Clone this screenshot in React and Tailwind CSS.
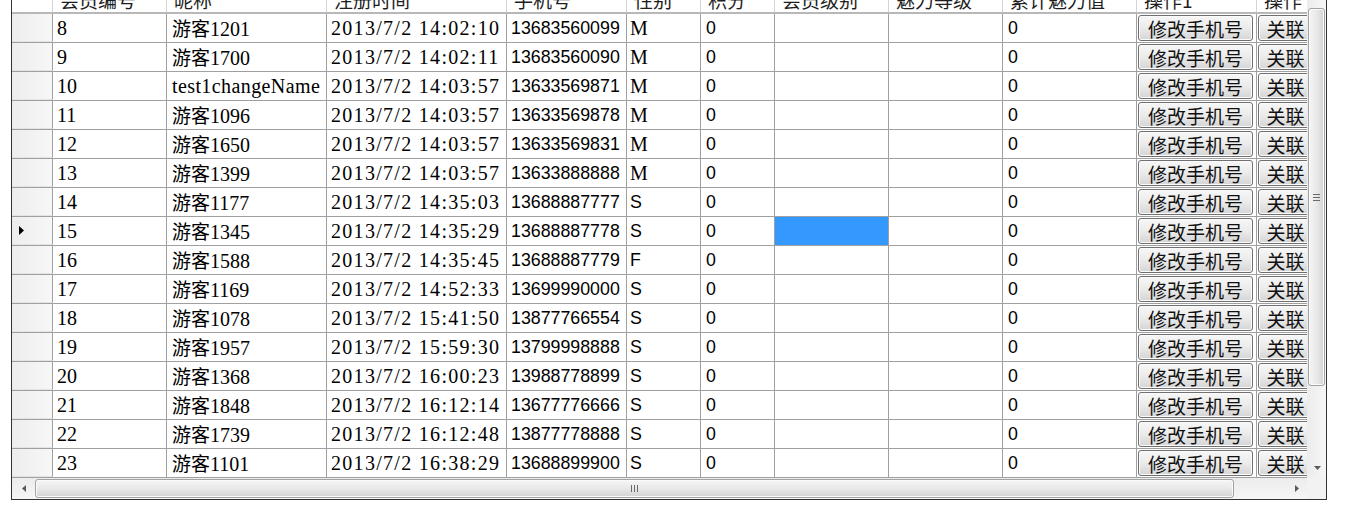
import React from 'react';

const serif = "font-['Liberation_Serif','Noto_Sans_CJK_SC',serif] text-[20px] leading-[24px]";
const sans = "font-['Liberation_Sans','Noto_Sans_CJK_SC',sans-serif] text-[17.8px] leading-[24px]";
const cjk = "font-['Noto_Sans_CJK_SC',sans-serif] text-[19px]";

const rows = [
  ['8', '游客1201', '2013/7/2 14:02:10', '13683560099', 'M'],
  ['9', '游客1700', '2013/7/2 14:02:11', '13683560090', 'M'],
  ['10', 'test1changeName', '2013/7/2 14:03:57', '13633569871', 'M'],
  ['11', '游客1096', '2013/7/2 14:03:57', '13633569878', 'M'],
  ['12', '游客1650', '2013/7/2 14:03:57', '13633569831', 'M'],
  ['13', '游客1399', '2013/7/2 14:03:57', '13633888888', 'M'],
  ['14', '游客1177', '2013/7/2 14:35:03', '13688887777', 'S'],
  ['15', '游客1345', '2013/7/2 14:35:29', '13688887778', 'S'],
  ['16', '游客1588', '2013/7/2 14:35:45', '13688887779', 'F'],
  ['17', '游客1169', '2013/7/2 14:52:33', '13699990000', 'S'],
  ['18', '游客1078', '2013/7/2 15:41:50', '13877766554', 'S'],
  ['19', '游客1957', '2013/7/2 15:59:30', '13799998888', 'S'],
  ['20', '游客1368', '2013/7/2 16:00:23', '13988778899', 'S'],
  ['21', '游客1848', '2013/7/2 16:12:14', '13677776666', 'S'],
  ['22', '游客1739', '2013/7/2 16:12:48', '13877778888', 'S'],
  ['23', '游客1101', '2013/7/2 16:38:29', '13688899900', 'S'],
];

const SELECTED = 7;

const headers = [
  { title: '会员编号', w: 'w-[114px]' },
  { title: '昵称', w: 'w-[160px]' },
  { title: '注册时间', w: 'w-[180px]' },
  { title: '手机号', w: 'w-[120px]' },
  { title: '性别', w: 'w-[74px]' },
  { title: '积分', w: 'w-[74px]' },
  { title: '会员级别', w: 'w-[114px]' },
  { title: '魅力等级', w: 'w-[114px]' },
  { title: '累计魅力值', w: 'w-[134px]' },
  { title: '操作1', w: 'w-[120px]' },
  { title: '操作', w: 'w-[60px]' },
];

function Cell({ w, className = '', children }) {
  return (
    <div className={`${w} shrink-0 h-full border-r border-[#a0a0a0] flex items-center overflow-hidden whitespace-nowrap text-black ${className}`}>
      {children}
    </div>
  );
}

function Nick({ name }) {
  if (name.startsWith('游客')) {
    return (
      <span className={serif}>
        <span className={cjk}>游客</span>
        {name.slice(2)}
      </span>
    );
  }
  return <span className={`${serif} tracking-[0.4px]`}>{name}</span>;
}

function GridButton({ label }) {
  return (
    <button className="w-full h-[26px] mx-px rounded-[3px] border border-[#707070] bg-gradient-to-b from-[#f7f7f7] via-[#ebebeb] to-[#d5d5d5] shadow-[inset_0_0_0_1px_#fbfbfb] flex items-center justify-center text-[19px] leading-none text-[#111] font-['Noto_Sans_CJK_SC',sans-serif]">
      {label}
    </button>
  );
}

function HeaderRow() {
  return (
    <div className="flex h-[26px] border-b-2 border-[#b8b8b8] bg-white">
      <div className="w-[41px] shrink-0 border-r border-[#d5d5d5]" />
      {headers.map((h) => (
        <div
          key={h.title}
          className={`${h.w} shrink-0 border-r border-[#d5d5d5] flex items-center pl-[7px] whitespace-nowrap overflow-hidden text-[19px] text-[#1e1e1e] font-['Noto_Sans_CJK_SC',sans-serif]`}
        >
          {h.title}
        </div>
      ))}
    </div>
  );
}

function DataRow({ r, idx }) {
  const selected = idx === SELECTED;
  return (
    <div className="flex h-[29px] border-b border-[#a0a0a0] bg-white">
      <div className="w-[41px] shrink-0 h-full border-r border-[#a0a0a0] -mb-px border-b border-b-[#e3e3e3] bg-gradient-to-r from-[#ededed] to-[#f7f7f7] flex items-center pl-[7px]">
        {selected && (
          <svg width="6" height="9" viewBox="0 0 6 9">
            <path d="M0 0 L5 4.5 L0 9 Z" fill="#000" />
          </svg>
        )}
      </div>
      <Cell w="w-[114px]" className="pl-[4px]"><span className={serif}>{r[0]}</span></Cell>
      <Cell w="w-[160px]" className="pl-[5px]"><Nick name={r[1]} /></Cell>
      <Cell w="w-[180px]" className="pl-[4px]"><span className={`${serif} tracking-[1.3px]`}>{r[2]}</span></Cell>
      <Cell w="w-[120px]" className="pl-[4px]"><span className={sans}>{r[3]}</span></Cell>
      <Cell w="w-[74px]" className="pl-[3px]">
        <span className={r[4] === 'M' ? serif : sans}>{r[4]}</span>
      </Cell>
      <Cell w="w-[74px]" className="pl-[5px]"><span className={sans}>0</span></Cell>
      <Cell w="w-[114px]" className={selected ? 'bg-[#3399ff]' : ''} />
      <Cell w="w-[114px]" />
      <Cell w="w-[134px]" className="pl-[5px]"><span className={sans}>0</span></Cell>
      <Cell w="w-[120px]" className="pr-[2px]"><GridButton label="修改手机号" /></Cell>
      <Cell w="w-[60px]" className="pr-[2px]"><GridButton label="关联" /></Cell>
    </div>
  );
}

function VScroll() {
  return (
    <div className="w-[19px] shrink-0 flex flex-col bg-gradient-to-r from-[#ececec] to-[#f6f6f6]">
      <div className="h-[20px] shrink-0" />
      <div className="h-[378px] shrink-0 mx-px rounded-[3px] border border-[#a3a3a3] bg-gradient-to-r from-[#f5f5f5] via-[#e9e9e9] to-[#d3d3d3] shadow-[inset_0_0_0_1px_#fafafa] flex flex-col items-center justify-center gap-[2px]">
        <div className="w-[7px] h-px bg-[#6a6a6a]" />
        <div className="w-[7px] h-px bg-[#6a6a6a]" />
        <div className="w-[7px] h-px bg-[#6a6a6a]" />
      </div>
      <div className="flex-1" />
      <div className="h-[20px] shrink-0 flex items-center justify-center pl-[2px]">
        <svg width="7" height="4" viewBox="0 0 7 4">
          <path d="M0 0 L7 0 L3.5 4 Z" fill="#5a5a5a" />
        </svg>
      </div>
    </div>
  );
}

function HScroll() {
  return (
    <div className="w-[1295px] shrink-0 flex bg-gradient-to-b from-[#ececec] to-[#f6f6f6]">
      <div className="w-[23px] shrink-0 flex items-center justify-center">
        <svg width="4" height="7" viewBox="0 0 4 7">
          <path d="M4 0 L4 7 L0 3.5 Z" fill="#5a5a5a" />
        </svg>
      </div>
      <div className="w-[1199px] shrink-0 my-px rounded-[3px] border border-[#a3a3a3] bg-gradient-to-b from-[#f5f5f5] via-[#e9e9e9] to-[#d3d3d3] shadow-[inset_0_0_0_1px_#fafafa] flex items-center justify-center gap-[2px]">
        <div className="w-px h-[7px] bg-[#6a6a6a]" />
        <div className="w-px h-[7px] bg-[#6a6a6a]" />
        <div className="w-px h-[7px] bg-[#6a6a6a]" />
      </div>
      <div className="flex-1" />
      <div className="w-[21px] shrink-0 flex items-center justify-center">
        <svg width="4" height="7" viewBox="0 0 4 7">
          <path d="M0 0 L4 3.5 L0 7 Z" fill="#5a5a5a" />
        </svg>
      </div>
    </div>
  );
}

export default function App() {
  return (
    <div className="w-[1362px] h-[525px] bg-white overflow-hidden">
      <div className="ml-[11px] w-[1316px] h-[500px] overflow-hidden">
        <div className="-mt-[13px] h-[513px] border border-[#333333] flex flex-col">
          <div className="flex h-[490px] shrink-0">
            <div className="w-[1295px] shrink-0 overflow-hidden">
              <div className="w-max">
                <HeaderRow />
                {rows.map((r, i) => (
                  <DataRow key={r[0]} r={r} idx={i} />
                ))}
              </div>
            </div>
            <VScroll />
          </div>
          <div className="flex h-[21px] shrink-0">
            <HScroll />
            <div className="w-[19px] shrink-0 bg-[#f2f2f2]" />
          </div>
        </div>
      </div>
    </div>
  );
}
